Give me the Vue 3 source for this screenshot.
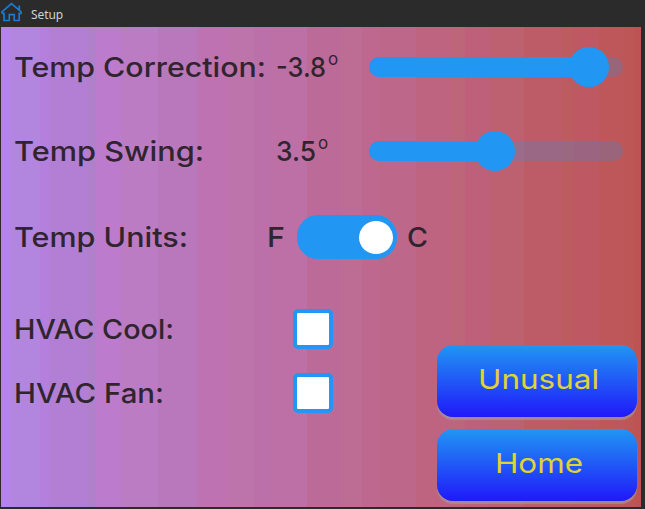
<script setup>
import { h } from 'vue'

const Label = (props) =>
  h('svg', { width: props.w, height: 40, class: 'label' }, [
    h('text', { x: 0, y: 30, textLength: props.w, lengthAdjust: 'spacingAndGlyphs' }, props.text),
  ])
Label.props = ['text', 'w']

const sliders = [
  { name: 'Temp Correction:', w: 252, value: '-3.8', vw: 50, fill: 220 },
  { name: 'Temp Swing:', w: 190, value: '3.5', vw: 40, fill: 126 },
]
const options = [
  { name: 'HVAC Cool:', w: 160 },
  { name: 'HVAC Fan:', w: 150 },
]
const buttons = [
  { name: 'Unusual', w: 121 },
  { name: 'Home', w: 88 },
]
</script>

<template>
  <div class="window">
    <header class="titlebar">
      <svg class="home" width="22" height="20" viewBox="0 0 22 20" fill="none" stroke="#1b7bd0" stroke-width="1.7">
        <path d="M.9 11.3V9.8L10.5 1.6l9.6 8.2v1.5h-1.9v7.2h-5v-5.8H8.3v5.8H3v-7.2H.9M18.3 8.2V3.4" />
      </svg>
      <span>Setup</span>
    </header>
    <main class="screen">
      <div v-for="s in sliders" :key="s.name" class="row slider-row">
        <Label :text="s.name" :w="s.w" />
        <div class="value"><Label :text="s.value" :w="s.vw" /><span class="degree">o</span></div>
        <div class="track">
          <div class="fill" :style="{ width: s.fill + 'px' }"><i class="knob"></i></div>
        </div>
      </div>
      <div class="row unit-row">
        <Label text="Temp Units:" :w="174" />
        <div class="units">
          <Label text="F" :w="18" />
          <div class="toggle"><i></i></div>
          <Label text="C" :w="21" />
        </div>
      </div>
      <div class="bottom">
        <div class="options">
          <div v-for="o in options" :key="o.name" class="row option">
            <Label :text="o.name" :w="o.w" />
            <i class="checkbox"></i>
          </div>
        </div>
        <div class="buttons">
          <button v-for="b in buttons" :key="b.name"><Label :text="b.name" :w="b.w" /></button>
        </div>
      </div>
    </main>
  </div>
</template>

<style>
body { margin: 0; background: #2b2b2b; overflow: hidden; }
.label { display: block; overflow: visible; flex: none; }
.label text { font: 450 27.5px Inter, sans-serif; fill: currentColor; }
button .label text { font-weight: 400; }
</style>

<style scoped>
.window { width: 645px; height: 509px; box-sizing: border-box; background: #2b2b2b; }
.titlebar { height: 27px; display: flex; align-items: flex-start; color: #d0d0d0; font: 12px/16px "Noto Sans", sans-serif; }
.home { margin: 2px 0 0 1px; }
.titlebar span { margin: 7px 0 0 8px; letter-spacing: -0.1px; }
.screen {
  width: 640px; height: 480px; margin-left: 1px; padding: 20px 0 0 13px; box-sizing: border-box;
  color: #30252f;
  background: linear-gradient(90deg,
    #b583ea 10px, #b286df 10px 39px, #b57fdd 39px 48px, #b37fd4 48px 86px, #b080cb 86px 95px,
    #bc7bcd 95px 120px, #bb7cc4 120px 157px, #ba78bc 157px 196px, #bc74b3 196px 200px,
    #bf72b2 200px 228px, #bd74aa 228px 253px, #bb70aa 253px 269px, #bd70a5 269px 306px,
    #bc6b99 306px 340px, #bd6c94 340px 361px, #be6890 361px 378px, #bd688a 378px 415px,
    #be6480 415px 450px, #bd6579 450px 464px, #be6079 464px 489px, #bd6070 489px 523px,
    #bd5c66 523px 561px, #bd5c60 561px 572px, #be5862 572px 598px, #bd5759 598px 624px,
    #bd5656 624px 633px, #bd5352 633px);
}
.row { display: grid; align-items: center; height: 40px; }
.slider-row { grid-template-columns: 262px 93px 254px; margin-bottom: 44px; }
.value { display: flex; }
.degree { font: 400 17px/17px Inter, sans-serif; margin: 4px 0 0 2px; }
.track { height: 20px; border-radius: 10px; background: rgba(33, 150, 243, 0.22); }
.fill { position: relative; height: 20px; border-radius: 10px 0 0 10px; background: #2196f3; }
.knob { position: absolute; right: -20px; top: -10px; width: 40px; height: 40px; border-radius: 50%; background: #2196f3; }
.unit-row { grid-template-columns: 253px 1fr; height: 44px; }
.units { display: flex; align-items: center; }
.toggle { width: 100px; height: 44px; margin: 0 10px 0 12px; padding: 0 4px; box-sizing: border-box; border-radius: 21px; background: #2196f3; display: flex; align-items: center; justify-content: flex-end; }
.toggle i { width: 34px; height: 33px; border-radius: 50%; background: #fff; }
.bottom { display: flex; margin-top: 50px; }
.options { width: 423px; display: grid; gap: 24px; align-content: start; }
.option { grid-template-columns: 279px 40px; }
.checkbox { width: 40px; height: 40px; box-sizing: border-box; border: 4px solid #2196f3; border-radius: 5px; background: #fff; }
.buttons { display: grid; gap: 12px; margin-top: 36px; align-content: start; }
button { width: 200px; height: 72px; padding: 0 0 5px 3px; border: 0; border-radius: 16px; color: #e0d332; background: linear-gradient(#2196f3, #2019fa); box-shadow: 0 3px 1px rgba(158, 158, 158, 0.65); display: flex; align-items: center; justify-content: center; }
</style>
